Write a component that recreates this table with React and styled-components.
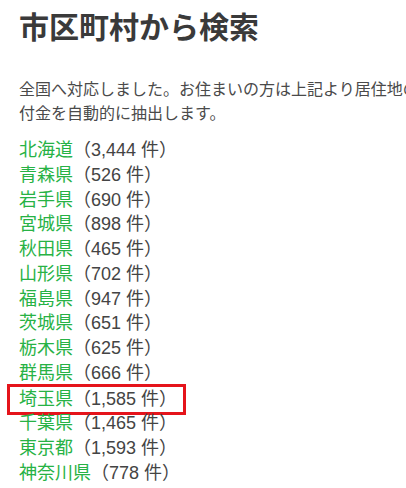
import React from "react";
import styled, { createGlobalStyle } from "styled-components";

const prefectures = [
  { name: "北海道", count: "3,444" },
  { name: "青森県", count: "526" },
  { name: "岩手県", count: "690" },
  { name: "宮城県", count: "898" },
  { name: "秋田県", count: "465" },
  { name: "山形県", count: "702" },
  { name: "福島県", count: "947" },
  { name: "茨城県", count: "651" },
  { name: "栃木県", count: "625" },
  { name: "群馬県", count: "666" },
  { name: "埼玉県", count: "1,585", marked: true },
  { name: "千葉県", count: "1,465" },
  { name: "東京都", count: "1,593" },
  { name: "神奈川県", count: "778" },
];

const GlobalStyle = createGlobalStyle`
  html, body {
    margin: 0;
    padding: 0;
    overflow: hidden;
    background: #ffffff;
  }
  body {
    font-family: "Liberation Sans", "Noto Sans CJK JP", sans-serif;
    color: #444444;
  }
`;

export default function App() {
  return (
    <>
      <GlobalStyle />
      <Page>
        <Title>市区町村から検索</Title>
        <Lead>
          全国へ対応しました。お住まいの方は上記より居住地の寄付金を自動的に抽出します。
        </Lead>
        <List>
          {prefectures.map((p) => (
            <Item key={p.name} $marked={p.marked}>
              <PrefLink href="#">{p.name}</PrefLink>
              <Count>（{p.count} 件）</Count>
            </Item>
          ))}
        </List>
      </Page>
    </>
  );
}

// styled components
const Page = styled.div`
  padding: 8px 0 0 19px;
  width: 430px;
`;

const Title = styled.h1`
  margin: 0;
  font-size: 30px;
  line-height: 40px;
  font-weight: 700;
  color: #3a3a3a;
`;

const Lead = styled.p`
  margin: 30px 0 0;
  width: 418px;
  font-size: 16px;
  line-height: 24px;
  color: #4a4a4a;
`;

const List = styled.div`
  margin-top: 12px;
  display: flex;
  flex-direction: column;
  align-items: flex-start;
`;

const Item = styled.div`
  font-size: 18px;
  line-height: 24.77px;
  white-space: nowrap;
  ${({ $marked }) =>
    $marked &&
    `
    border: 3px solid #e5141b;
    margin: -2px 0 -4px -12px;
    padding: 0 6px 1px 9px;
  `}
`;

const PrefLink = styled.a`
  color: #27b245;
  text-decoration: none;
`;

const Count = styled.span`
  color: #444444;
`;
